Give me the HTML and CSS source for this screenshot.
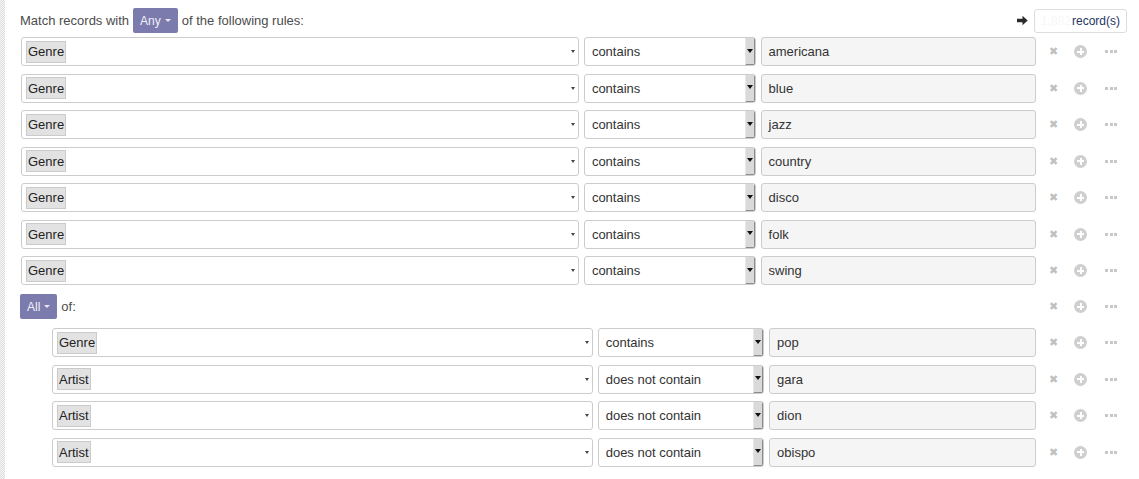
FILE: index.html
```html
<!DOCTYPE html>
<html>
<head>
<meta charset="utf-8">
<link rel="stylesheet" href="styles.css">
</head>
<body>
<div class="page">
  <div class="strip"></div>
  <div class="content">
    <div class="header">
      <span class="label">Match records with</span>
      <span class="pill">Any <span class="caret"></span></span>
      <span class="label">of the following rules:</span>
      <div class="count">
        <svg class="arrow" width="11" height="11" viewBox="0 0 11 11"><path d="M0 3.8h5.5V0.8l5.2 4.7-5.2 4.7V7.2H0z" fill="#2a2a2a"/></svg>
        <div class="count-box"><span class="faint">1,882</span><span class="rec">record(s)</span></div>
      </div>
    </div>

    <div class="rule">
      <div class="fields">
        <div class="field"><span class="tag">Genre</span><span class="tri"></span></div>
        <div class="op"><span>contains</span><span class="btn"><span class="btri"></span></span></div>
        <div class="value">americana</div>
      </div>
      <div class="actions"><span class="x">✖</span><span class="plus"></span><span class="dots"><i></i><i></i><i></i></span></div>
    </div>
    <div class="rule">
      <div class="fields">
        <div class="field"><span class="tag">Genre</span><span class="tri"></span></div>
        <div class="op"><span>contains</span><span class="btn"><span class="btri"></span></span></div>
        <div class="value">blue</div>
      </div>
      <div class="actions"><span class="x">✖</span><span class="plus"></span><span class="dots"><i></i><i></i><i></i></span></div>
    </div>
    <div class="rule">
      <div class="fields">
        <div class="field"><span class="tag">Genre</span><span class="tri"></span></div>
        <div class="op"><span>contains</span><span class="btn"><span class="btri"></span></span></div>
        <div class="value">jazz</div>
      </div>
      <div class="actions"><span class="x">✖</span><span class="plus"></span><span class="dots"><i></i><i></i><i></i></span></div>
    </div>
    <div class="rule">
      <div class="fields">
        <div class="field"><span class="tag">Genre</span><span class="tri"></span></div>
        <div class="op"><span>contains</span><span class="btn"><span class="btri"></span></span></div>
        <div class="value">country</div>
      </div>
      <div class="actions"><span class="x">✖</span><span class="plus"></span><span class="dots"><i></i><i></i><i></i></span></div>
    </div>
    <div class="rule">
      <div class="fields">
        <div class="field"><span class="tag">Genre</span><span class="tri"></span></div>
        <div class="op"><span>contains</span><span class="btn"><span class="btri"></span></span></div>
        <div class="value">disco</div>
      </div>
      <div class="actions"><span class="x">✖</span><span class="plus"></span><span class="dots"><i></i><i></i><i></i></span></div>
    </div>
    <div class="rule">
      <div class="fields">
        <div class="field"><span class="tag">Genre</span><span class="tri"></span></div>
        <div class="op"><span>contains</span><span class="btn"><span class="btri"></span></span></div>
        <div class="value">folk</div>
      </div>
      <div class="actions"><span class="x">✖</span><span class="plus"></span><span class="dots"><i></i><i></i><i></i></span></div>
    </div>
    <div class="rule">
      <div class="fields">
        <div class="field"><span class="tag">Genre</span><span class="tri"></span></div>
        <div class="op"><span>contains</span><span class="btn"><span class="btri"></span></span></div>
        <div class="value">swing</div>
      </div>
      <div class="actions"><span class="x">✖</span><span class="plus"></span><span class="dots"><i></i><i></i><i></i></span></div>
    </div>

    <div class="rule group-head">
      <div class="fields-head">
        <span class="pill pill-all">All <span class="caret"></span></span>
        <span class="label">of:</span>
      </div>
      <div class="actions"><span class="x">✖</span><span class="plus"></span><span class="dots"><i></i><i></i><i></i></span></div>
    </div>

    <div class="group">
      <div class="rule">
        <div class="fields">
          <div class="field"><span class="tag">Genre</span><span class="tri"></span></div>
          <div class="op"><span>contains</span><span class="btn"><span class="btri"></span></span></div>
          <div class="value">pop</div>
        </div>
        <div class="actions"><span class="x">✖</span><span class="plus"></span><span class="dots"><i></i><i></i><i></i></span></div>
      </div>
      <div class="rule">
        <div class="fields">
          <div class="field"><span class="tag">Artist</span><span class="tri"></span></div>
          <div class="op"><span>does not contain</span><span class="btn"><span class="btri"></span></span></div>
          <div class="value">gara</div>
        </div>
        <div class="actions"><span class="x">✖</span><span class="plus"></span><span class="dots"><i></i><i></i><i></i></span></div>
      </div>
      <div class="rule">
        <div class="fields">
          <div class="field"><span class="tag">Artist</span><span class="tri"></span></div>
          <div class="op"><span>does not contain</span><span class="btn"><span class="btri"></span></span></div>
          <div class="value">dion</div>
        </div>
        <div class="actions"><span class="x">✖</span><span class="plus"></span><span class="dots"><i></i><i></i><i></i></span></div>
      </div>
      <div class="rule">
        <div class="fields">
          <div class="field"><span class="tag">Artist</span><span class="tri"></span></div>
          <div class="op"><span>does not contain</span><span class="btn"><span class="btri"></span></span></div>
          <div class="value">obispo</div>
        </div>
        <div class="actions"><span class="x">✖</span><span class="plus"></span><span class="dots"><i></i><i></i><i></i></span></div>
      </div>
    </div>
  </div>
</div>
</body>
</html>
```

FILE: styles.css
```css
html, body {
  margin: 0;
  padding: 0;
  background: #fff;
}
body {
  font-family: "Liberation Sans", Arial, sans-serif;
  font-size: 13px;
  color: #333;
}
.page {
  display: flex;
  height: 479px;
  overflow: hidden;
}
.strip {
  width: 5px;
  flex: none;
  background-color: #f4f4f4;
  background-image: repeating-conic-gradient(#dcdcdc 0 25%, #f7f7f7 0 50%);
  background-size: 2px 2px;
}
.content {
  flex: 1;
  padding: 8px 0 0 15px;
}
.header {
  display: flex;
  align-items: center;
  height: 25px;
  margin-bottom: 4px;
}
.label {
  color: #4c4c4c;
  font-size: 13px;
}
.pill {
  display: inline-flex;
  align-items: center;
  height: 25px;
  box-sizing: border-box;
  padding: 0 7px;
  margin: 0 4px;
  background: #7c7bad;
  color: #f0f0f8;
  font-size: 12px;
  border-radius: 2px;
}
.caret {
  display: inline-block;
  width: 0;
  height: 0;
  margin-left: 4px;
  border-left: 3px solid transparent;
  border-right: 3px solid transparent;
  border-top: 3px solid #e8e8f2;
}
.count {
  margin-left: auto;
  margin-right: 12px;
  display: flex;
  align-items: center;
}
.arrow {
  margin-right: 6px;
}
.count-box {
  width: 93px;
  height: 24px;
  box-sizing: border-box;
  border: 1px solid #ddd;
  border-radius: 3px;
  display: flex;
  align-items: center;
  justify-content: space-between;
  padding: 0 6px 0 6px;
  font-size: 12px;
}
.faint {
  color: #f7f7f7;
}
.rec {
  color: #1f3565;
}
.rule {
  display: flex;
  height: 29px;
  margin-bottom: 7.5px;
  padding-left: 1px;
}
.fields {
  flex: 1;
  display: grid;
  grid-template-columns: 559fr 172fr 276fr;
  column-gap: 5px;
}
.field, .op, .value {
  box-sizing: border-box;
  height: 29px;
  border: 1px solid #ccc;
  border-radius: 3px;
  display: flex;
  align-items: center;
  position: relative;
}
.field {
  background: #fff;
  padding-left: 4px;
}
.tag {
  display: inline-flex;
  align-items: center;
  height: 22px;
  box-sizing: border-box;
  padding: 0 1px 0 1px;
  background: #e2e2e2;
  border: 1px solid #cbcbcb;
  color: #222;
  font-size: 13px;
}
.tri {
  position: absolute;
  top: 12px;
  right: 3px;
  border-left: 2.5px solid transparent;
  border-right: 2.5px solid transparent;
  border-top: 3px solid #444;
  width: 0;
  height: 0;
}
.op {
  background: #fff;
  padding-left: 7px;
  color: #333;
  overflow: hidden;
}
.btn {
  position: absolute;
  right: -1px;
  top: -1px;
  bottom: -1px;
  width: 11px;
  box-sizing: border-box;
  background: #dadada;
  border-right: 2px solid #8c8c8c;
  border-bottom: 2px solid #8c8c8c;
  border-left: 1px solid #e8e8e8;
  display: flex;
  align-items: center;
  justify-content: center;
}
.btri {
  width: 0;
  height: 0;
  border-left: 3px solid transparent;
  border-right: 3px solid transparent;
  border-top: 4px solid #111;
}
.value {
  background: #f5f5f5;
  padding-left: 7px;
  color: #333;
}
.actions {
  width: 103px;
  flex: none;
  display: flex;
  align-items: center;
  padding-left: 13px;
  box-sizing: border-box;
}
.x {
  width: 9px;
  font-size: 11px;
  color: #c0c0c0;
  line-height: 1;
  text-align: center;
}
.plus {
  width: 13px;
  height: 13px;
  border-radius: 50%;
  background: #cfcfcf;
  margin-left: 16px;
  position: relative;
}
.plus::before, .plus::after {
  content: "";
  position: absolute;
  background: #fff;
}
.plus::before {
  left: 3px;
  top: 5.5px;
  width: 7px;
  height: 2px;
}
.plus::after {
  left: 5.5px;
  top: 3px;
  width: 2px;
  height: 7px;
}
.dots {
  display: flex;
  gap: 1.5px;
  margin-left: 18px;
}
.dots i {
  display: block;
  width: 3px;
  height: 3px;
  background: #c8c8c8;
}
.group-head {
  height: 28px;
  margin-bottom: 7.5px;
  padding-left: 0;
}
.fields-head {
  flex: 1;
  display: flex;
  align-items: center;
}
.pill-all {
  margin: 0 4px 0 0;
}
.group {
  padding-left: 32px;
}
.group .rule {
  padding-left: 0;
}
```
